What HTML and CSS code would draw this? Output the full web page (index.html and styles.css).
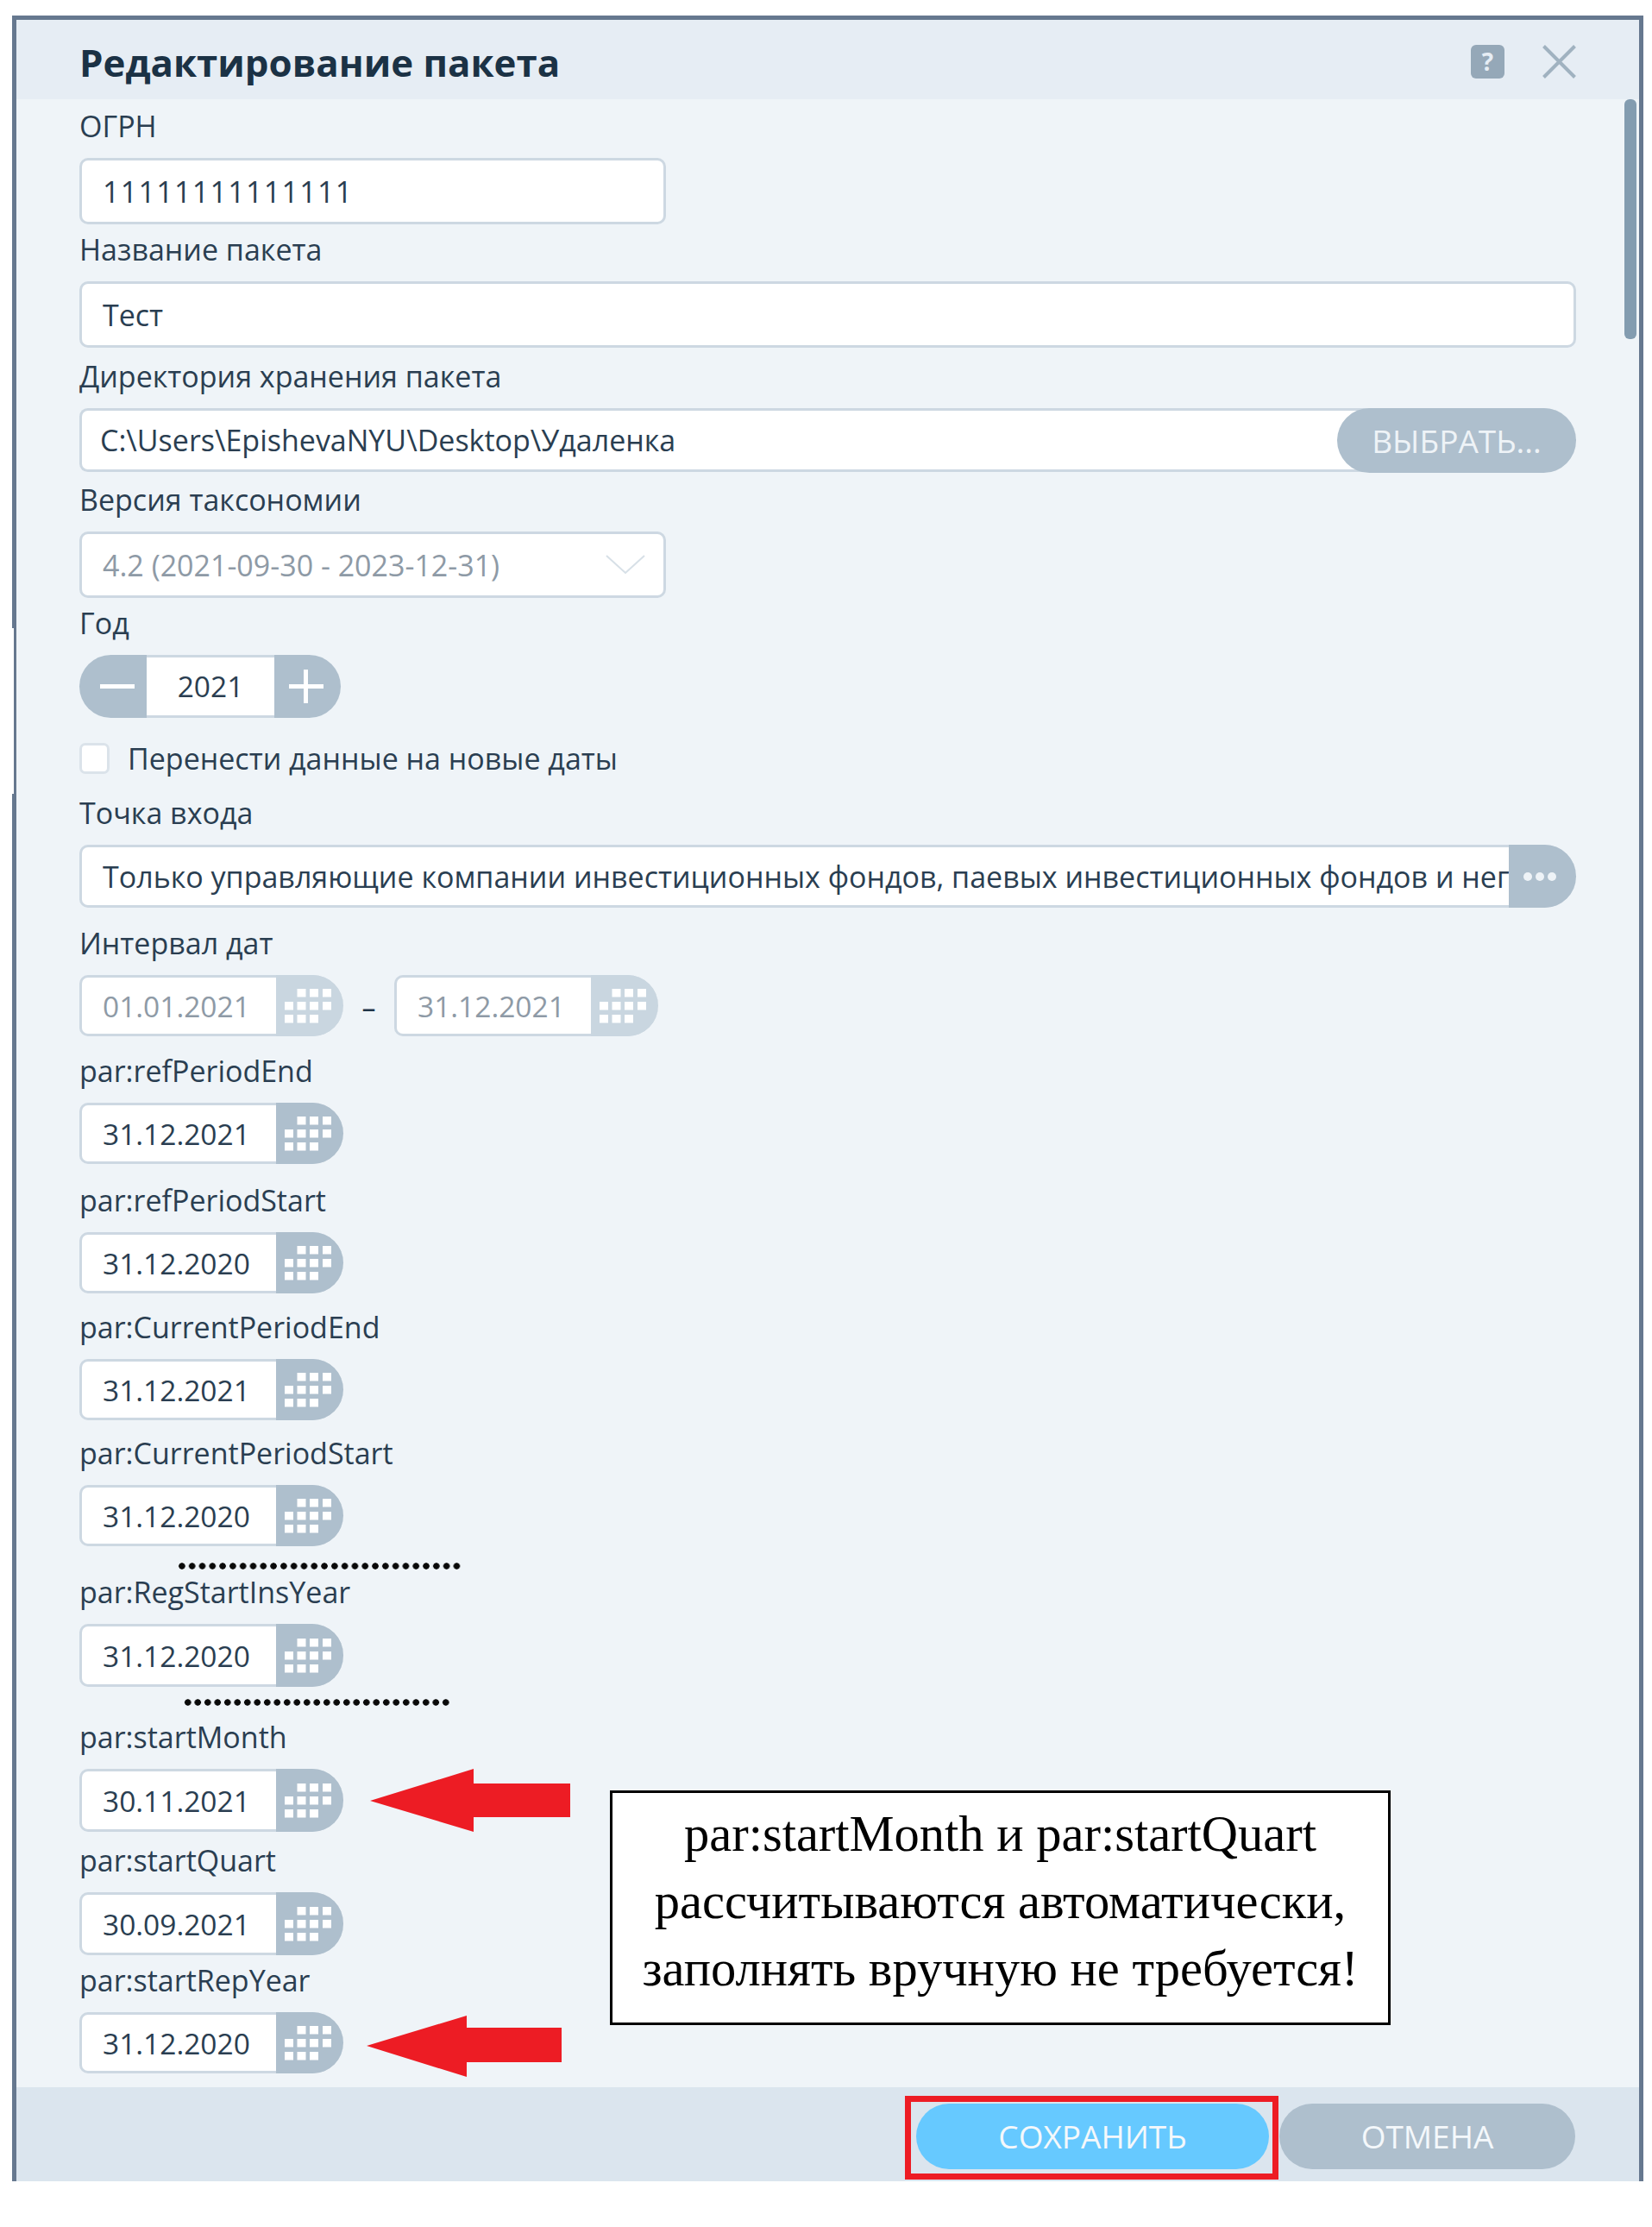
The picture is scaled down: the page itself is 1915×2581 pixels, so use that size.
FILE: index.html
```html
<!DOCTYPE html>
<html>
  <head>
    <meta charset="UTF-8" />
    <title>Редактирование пакета</title>
    <link rel="stylesheet" href="styles.css">
  </head>
  <body>
    <svg class="defs" width="0" height="0">
      <symbol id="cal" viewBox="0 0 64 40">
        <rect x="14.5" y="0" width="10" height="9.5" />
        <rect x="29" y="0" width="10" height="9.5" />
        <rect x="44" y="0" width="10" height="9.5" />
        <rect x="0" y="15" width="10" height="9.5" />
        <rect x="14.5" y="15" width="10" height="9.5" />
        <rect x="29" y="15" width="10" height="9.5" />
        <rect x="44" y="15" width="10" height="9.5" />
        <rect x="0" y="30" width="10" height="9.5" />
        <rect x="14.5" y="30" width="10" height="9.5" />
        <rect x="29" y="30" width="10" height="9.5" />
      </symbol>
    </svg>

    <div id="dialog">
      <div id="header">
        <div id="title">Редактирование пакета</div>
        <div id="help">?</div>
        <svg id="close" width="39" height="39" viewBox="0 0 39 39">
          <path d="M1.5 1.5 L37.5 37.5 M37.5 1.5 L1.5 37.5" />
        </svg>
      </div>

      <div id="content">
        <div id="scrollbar"></div>

        <div class="field mt-20">
          <div class="label">ОГРН</div>
          <div class="input short spaced">11111111111111</div>
        </div>
        <div class="field mt-18">
          <div class="label">Название пакета</div>
          <div class="input wide">Тест</div>
        </div>
        <div class="field mt-22">
          <div class="label">Директория хранения пакета</div>
          <div class="input wide low path">
            <span class="input-text">C:\Users\EpishevaNYU\Desktop\Удаленка</span>
            <div class="pick-button">ВЫБРАТЬ...</div>
          </div>
        </div>
        <div class="field mt-21">
          <div class="label">Версия таксономии</div>
          <div class="input short disabled select">
            <span class="input-text">4.2 (2021-09-30 - 2023-12-31)</span>
            <svg class="chevron" width="46" height="23" viewBox="0 0 46 23">
              <path d="M1 1 L23 21 L45 1" />
            </svg>
          </div>
        </div>
        <div class="field mt-18">
          <div class="label">Год</div>
          <div class="stepper">
            <div class="step-button minus"><span class="bar-h"></span></div>
            <div class="step-value">2021</div>
            <div class="step-button plus"><span class="bar-h"></span><span class="bar-v"></span></div>
          </div>
        </div>
        <div class="check-row">
          <div class="checkbox"></div>
          <div class="check-label">Перенести данные на новые даты</div>
        </div>
        <div class="field mt-34">
          <div class="label">Точка входа</div>
          <div class="input wide low entry">
            <span class="input-text clip">Только управляющие компании инвестиционных фондов, паевых инвестиционных фондов и негосударственных пенсионных фондов</span>
            <div class="more-button"><i></i><i></i><i></i></div>
          </div>
        </div>
        <div class="field mt-30">
          <div class="label">Интервал дат</div>
          <div class="date-range">
            <div class="date disabled">
              <span class="date-text">01.01.2021</span>
              <div class="date-button"><svg width="64" height="40"><use href="#cal" /></svg></div>
            </div>
            <span class="dash">–</span>
            <div class="date disabled">
              <span class="date-text">31.12.2021</span>
              <div class="date-button"><svg width="64" height="40"><use href="#cal" /></svg></div>
            </div>
          </div>
        </div>
        <div class="field mt-29">
          <div class="label">par:refPeriodEnd</div>
          <div class="date">
            <span class="date-text">31.12.2021</span>
            <div class="date-button"><svg width="64" height="40"><use href="#cal" /></svg></div>
          </div>
        </div>
        <div class="field mt-31">
          <div class="label">par:refPeriodStart</div>
          <div class="date">
            <span class="date-text">31.12.2020</span>
            <div class="date-button"><svg width="64" height="40"><use href="#cal" /></svg></div>
          </div>
        </div>
        <div class="field mt-28">
          <div class="label">par:CurrentPeriodEnd</div>
          <div class="date">
            <span class="date-text">31.12.2021</span>
            <div class="date-button"><svg width="64" height="40"><use href="#cal" /></svg></div>
          </div>
        </div>
        <div class="field mt-27">
          <div class="label">par:CurrentPeriodStart</div>
          <div class="date">
            <span class="date-text">31.12.2020</span>
            <div class="date-button"><svg width="64" height="40"><use href="#cal" /></svg></div>
          </div>
        </div>
        <div class="field mt-42">
          <div class="label">par:RegStartInsYear</div>
          <div class="date tall">
            <span class="date-text">31.12.2020</span>
            <div class="date-button"><svg width="64" height="40"><use href="#cal" /></svg></div>
          </div>
        </div>
        <div class="field mt-47">
          <div class="label">par:startMonth</div>
          <div class="date tall">
            <span class="date-text">30.11.2021</span>
            <div class="date-button"><svg width="64" height="40"><use href="#cal" /></svg></div>
          </div>
        </div>
        <div class="field mt-22">
          <div class="label">par:startQuart</div>
          <div class="date tall">
            <span class="date-text">30.09.2021</span>
            <div class="date-button"><svg width="64" height="40"><use href="#cal" /></svg></div>
          </div>
        </div>
        <div class="field mt-18">
          <div class="label">par:startRepYear</div>
          <div class="date">
            <span class="date-text">31.12.2020</span>
            <div class="date-button"><svg width="64" height="40"><use href="#cal" /></svg></div>
          </div>
        </div>
      </div>

      <div id="footer">
        <div class="footer-button save">СОХРАНИТЬ</div>
        <div class="footer-button cancel">ОТМЕНА</div>
      </div>
    </div>

    <!-- Annotations drawn over the dialog -->
    <div id="notch"></div>
    <div class="dots dots-first"></div>
    <div class="dots dots-second"></div>
    <svg class="arrow arrow-first" width="232" height="73" viewBox="0 0 232 73">
      <polygon points="0,37 120,0 120,17 232,17 232,56 120,56 120,73" />
    </svg>
    <svg class="arrow arrow-second" width="226" height="71" viewBox="0 0 226 71">
      <polygon points="0,35 116,0 116,14 226,14 226,54 116,54 116,71" />
    </svg>
    <div id="note">
      <div>par:startMonth и par:startQuart</div>
      <div>рассчитываются автоматически,</div>
      <div>заполнять вручную не требуется!</div>
    </div>
    <div id="save-mark"></div>
  </body>
</html>
```

FILE: styles.css
```css
body {
  margin: 0;
  padding: 18px 10px 0 14px;
  background-color: white;
  font-family: 'Open Sans', sans-serif;
  color: #2a3e51;
  position: relative;
  height: 2581px;
  box-sizing: border-box;
  overflow: hidden;
}

.defs {
  position: absolute;
}

#dialog {
  height: 2510px;
  box-sizing: border-box;
  border: 5px solid #66788f;
  border-bottom: none;
  display: flex;
  flex-direction: column;
  background-color: #eff4f8;
}

#header {
  height: 92px;
  flex-shrink: 0;
  background-color: #e6edf4;
  display: flex;
  align-items: center;
  padding: 5px 73px 0 73px;
  box-sizing: border-box;
}

#title {
  flex-grow: 1;
  font-size: 43.8px;
  font-weight: 700;
  color: #1b3245;
  line-height: 50px;
}

#help {
  width: 39px;
  height: 39px;
  margin-right: 44px;
  border-radius: 6px;
  background-color: #95a8b8;
  color: #e6edf4;
  font-size: 28px;
  font-weight: 700;
  line-height: 39px;
  text-align: center;
}

#close path {
  stroke: #a0b2c0;
  stroke-width: 4;
  fill: none;
}

#content {
  flex-grow: 1;
  position: relative;
  padding-left: 73px;
  overflow: hidden;
}

#scrollbar {
  position: absolute;
  top: 0;
  right: 3px;
  width: 14px;
  height: 278px;
  border-radius: 6px;
  background-color: #839cb0;
}

/* Spacing between fields */
.mt-18 { margin-top: 18px; }
.mt-20 { margin-top: 20px; }
.mt-21 { margin-top: 21px; }
.mt-22 { margin-top: 22px; }
.mt-27 { margin-top: 27px; }
.mt-28 { margin-top: 28px; }
.mt-29 { margin-top: 29px; }
.mt-30 { margin-top: 30px; }
.mt-31 { margin-top: 31px; }
.mt-34 { margin-top: 34px; }
.mt-42 { margin-top: 42px; }
.mt-47 { margin-top: 47px; }

.label {
  height: 24px;
  line-height: 22px;
  margin-bottom: 24px;
  font-size: 34px;
  white-space: nowrap;
}

.input {
  height: 77px;
  box-sizing: border-box;
  border: 3px solid #cdd8e2;
  border-radius: 10px;
  background-color: white;
  display: flex;
  align-items: center;
  padding-left: 24px;
  font-size: 34px;
  white-space: nowrap;
}

.short {
  width: 680px;
}

.wide {
  width: 1735px;
}

.spaced {
  letter-spacing: 1.3px;
}

.low {
  height: 74px;
}

.input-text {
  flex-grow: 1;
}

.clip {
  overflow: hidden;
  min-width: 0;
}

.disabled {
  color: #8e9aa6;
}

.chevron {
  margin-right: 21px;
}

.chevron path {
  stroke: #d7e0e7;
  stroke-width: 2;
  fill: none;
}

.path {
  padding-left: 21px;
  border-right: none;
  border-radius: 10px 38px 38px 10px;
}

.pick-button {
  width: 277px;
  height: 75px;
  flex-shrink: 0;
  border-radius: 38px;
  background-color: #aebfcd;
  color: #eef3f7;
  font-size: 37px;
  line-height: 75px;
  text-align: center;
}

.entry {
  height: 73px;
  border-right: none;
  border-radius: 10px 37px 37px 10px;
}

.more-button {
  width: 78px;
  height: 73px;
  flex-shrink: 0;
  border-radius: 0 37px 37px 0;
  background-color: #aebfcd;
  display: flex;
  align-items: center;
  justify-content: center;
  gap: 4px;
  padding-right: 6px;
  box-sizing: border-box;
}

.more-button i {
  width: 10px;
  height: 10px;
  border-radius: 50%;
  background-color: #eef3f7;
}

.stepper {
  width: 303px;
  height: 73px;
  display: flex;
}

.step-button {
  width: 78px;
  flex-shrink: 0;
  background-color: #aebfcd;
  position: relative;
}

.minus {
  border-radius: 37px 0 0 37px;
}

.plus {
  width: 77px;
  border-radius: 0 37px 37px 0;
}

.bar-h {
  position: absolute;
  left: 24px;
  top: 34px;
  width: 40px;
  height: 5px;
  background-color: white;
}

.plus .bar-h {
  left: 17px;
}

.bar-v {
  position: absolute;
  left: 34px;
  top: 17px;
  width: 5px;
  height: 39px;
  background-color: white;
}

.step-value {
  flex-grow: 1;
  box-sizing: border-box;
  background-color: white;
  border-top: 3px solid #cdd8e2;
  border-bottom: 3px solid #cdd8e2;
  font-size: 33.5px;
  line-height: 67px;
  text-align: center;
}

.check-row {
  margin-top: 29px;
  height: 36px;
  display: flex;
  align-items: center;
}

.checkbox {
  width: 35px;
  height: 36px;
  box-sizing: border-box;
  border: 3px solid #dbe3ea;
  border-radius: 7px;
  background-color: white;
  margin-right: 21px;
}

.check-label {
  font-size: 34px;
}

.date-range {
  display: flex;
  align-items: center;
}

.dash {
  width: 59px;
  text-align: center;
  font-size: 32px;
  color: #1f3448;
  padding-top: 4px;
}

.date {
  width: 306px;
  height: 71px;
  box-sizing: border-box;
  border: 3px solid #cdd8e2;
  border-right: none;
  border-radius: 10px 36px 36px 10px;
  background-color: white;
  display: flex;
  align-items: center;
  font-size: 33.5px;
}

.tall {
  height: 73px;
}

.date-text {
  width: 225px;
  padding-left: 24px;
  box-sizing: border-box;
  white-space: nowrap;
}

.date-button {
  flex-grow: 1;
  align-self: stretch;
  margin: -3px 0;
  border-radius: 0 36px 36px 0;
  background-color: #aebfcd;
  display: flex;
  align-items: center;
  padding-left: 10px;
}

.date-button svg {
  fill: white;
}

.disabled .date-button {
  background-color: #c9d6e0;
}

#footer {
  height: 109px;
  flex-shrink: 0;
  background-color: #dbe5ee;
  display: flex;
  justify-content: flex-end;
  padding: 19px 74px 0 0;
  box-sizing: border-box;
  gap: 12px;
}

.footer-button {
  height: 76px;
  border-radius: 38px;
  color: #f4f8fb;
  font-size: 37px;
  line-height: 76px;
  text-align: center;
}

.save {
  width: 409px;
  background-color: #66c9ff;
}

.cancel {
  width: 343px;
  background-color: #aebfcd;
}

/* Annotations */
#notch {
  position: absolute;
  left: 14px;
  top: 728px;
  width: 2px;
  height: 192px;
  background-color: white;
}

.dots {
  position: absolute;
  height: 8px;
  background-image: radial-gradient(circle, #0a0a0a 3.4px, transparent 4px);
  background-size: 11.8px 8px;
}

.dots-first {
  left: 205px;
  top: 1811px;
  width: 331px;
}

.dots-second {
  left: 212px;
  top: 1969px;
  width: 312px;
  background-size: 11.5px 8px;
}

.arrow {
  position: absolute;
  fill: #ed1c24;
}

.arrow-first {
  left: 429px;
  top: 2050px;
}

.arrow-second {
  left: 425px;
  top: 2336px;
}

#note {
  position: absolute;
  left: 707px;
  top: 2075px;
  width: 905px;
  height: 272px;
  box-sizing: border-box;
  border: 3px solid black;
  background-color: white;
  color: black;
  font-family: 'Liberation Serif', serif;
  font-size: 58.5px;
  line-height: 78px;
  text-align: center;
  padding-top: 9px;
  white-space: nowrap;
}

#save-mark {
  position: absolute;
  left: 1049px;
  top: 2429px;
  width: 433px;
  height: 97px;
  box-sizing: border-box;
  border: 7px solid #ed1c24;
}
```
